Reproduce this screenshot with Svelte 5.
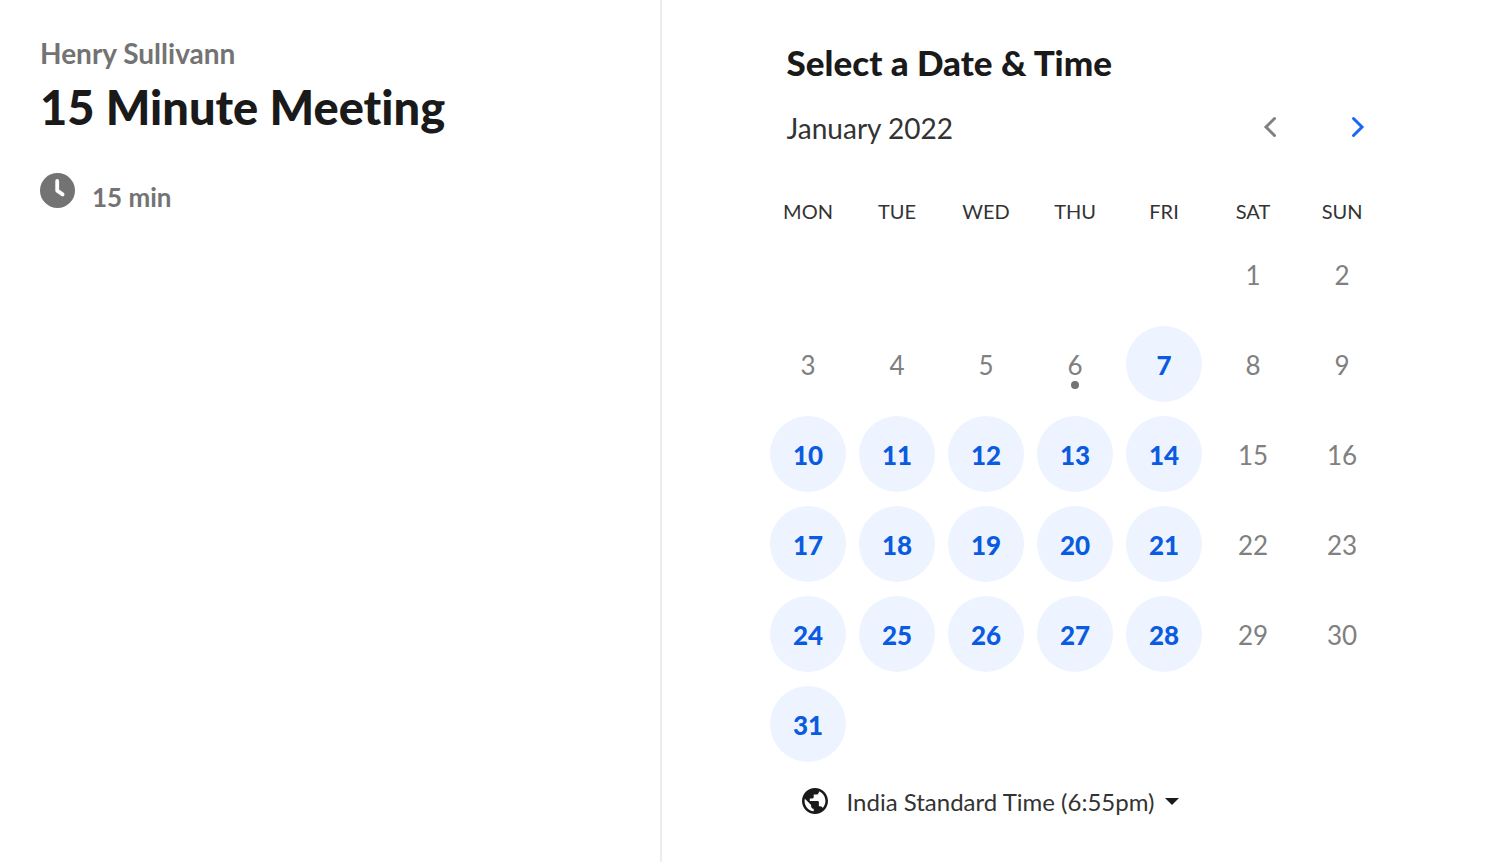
<script>
    const weekdays = ["Mon", "Tue", "Wed", "Thu", "Fri", "Sat", "Sun"];
    const today = 6;
    const lastDay = 31;
    const firstOffset = 5; // 1 January 2022 is a Saturday

    let selected = $state(null);
    let timezone = $state("Asia/Kolkata");

    // Six weeks, with null for the cells outside the month
    const weeks = Array.from({ length: 6 }, (_, week) =>
        weekdays.map((_, i) => {
            const day = week * 7 + i - firstOffset + 1;
            return day > 0 && day <= lastDay ? day : null;
        }),
    );

    const isAvailable = (day, column) => day > today && column < 5;
</script>

<main class="booking">
    <section class="details">
        <p class="host">Henry Sullivann</p>
        <h1>15 Minute Meeting</h1>
        <div class="duration">
            <svg class="clock" viewBox="0 0 35 35" aria-hidden="true">
                <circle cx="17.5" cy="17.5" r="17.5" fill="currentColor" />
                <path
                    d="M17.2 8v9.6l5.4 3.8"
                    fill="none"
                    stroke="#fff"
                    stroke-width="3.8"
                    stroke-linecap="round"
                    stroke-linejoin="round"
                />
            </svg>
            <span>15 min</span>
        </div>
    </section>

    <section class="picker">
        <h2>Select a Date &amp; Time</h2>

        <div class="month">
            <span class="month-name">January 2022</span>
            <div class="month-nav">
                <button class="prev" aria-label="Previous month" disabled>
                    <svg viewBox="0 0 16 24" aria-hidden="true">
                        <path d="M12.5 3.5L4 12l8.5 8.5" />
                    </svg>
                </button>
                <button class="next" aria-label="Next month">
                    <svg viewBox="0 0 16 24" aria-hidden="true">
                        <path d="M4.5 3.5L13 12l-8.5 8.5" />
                    </svg>
                </button>
            </div>
        </div>

        <table>
            <thead>
                <tr>
                    {#each weekdays as weekday}
                        <th scope="col">{weekday}</th>
                    {/each}
                </tr>
            </thead>
            <tbody>
                {#each weeks as week}
                    <tr>
                        {#each week as day, column}
                            <td>
                                {#if day}
                                    <button
                                        class="day"
                                        class:today={day === today}
                                        class:selected={day === selected}
                                        disabled={!isAvailable(day, column)}
                                        onclick={() => (selected = day)}
                                    >
                                        {day}
                                    </button>
                                {/if}
                            </td>
                        {/each}
                    </tr>
                {/each}
            </tbody>
        </table>

        <div class="timezone">
            <svg class="globe" viewBox="2 2 20 20" aria-hidden="true">
                <path
                    fill="currentColor"
                    d="M12 2C6.48 2 2 6.48 2 12s4.48 10 10 10 10-4.48 10-10S17.52 2 12 2zm-1 17.93c-3.95-.49-7-3.85-7-7.93 0-.62.08-1.21.21-1.79L9 15v1c0 1.1.9 2 2 2v1.93zm6.9-2.54c-.26-.81-1-1.39-1.9-1.39h-1v-3c0-.55-.45-1-1-1H8v-2h2c.55 0 1-.45 1-1V7h2c1.1 0 2-.9 2-2v-.41c2.93 1.19 5 4.06 5 7.41 0 2.08-.8 3.97-2.1 5.39z"
                />
            </svg>
            <select aria-label="Time zone" bind:value={timezone}>
                <option value="Asia/Kolkata">India Standard Time (6:55pm)</option>
            </select>
            <svg class="caret" viewBox="0 0 14 7" aria-hidden="true">
                <path d="M0 0h14L7 7z" fill="currentColor" />
            </svg>
        </div>
    </section>
</main>

<style>
    :global(body) {
        margin: 0;
        background: #fff;
        color: #1a1a1a;
        font-family: Lato, sans-serif;
        font-variant-ligatures: none;
    }

    button,
    select {
        margin: 0;
        padding: 0;
        border: none;
        background: none;
        color: inherit;
        font: inherit;
        cursor: pointer;
    }
    button:disabled {
        cursor: default;
    }

    .booking {
        display: flex;
        min-height: 100vh;
    }

    /* Event details */
    .details {
        flex: 0 0 44%;
        padding: 35px 40px;
        box-sizing: border-box;
    }
    .host {
        margin: 0;
        font-size: 28px;
        line-height: 36px;
        font-weight: 700;
        color: #737373;
    }
    h1 {
        margin: 8px 0 38px;
        font-size: 47px;
        line-height: 56px;
        font-weight: 900;
    }
    .duration {
        display: flex;
        gap: 17px;
        font-size: 26px;
        line-height: 36px;
        font-weight: 700;
        color: #737373;
    }
    .duration span {
        padding-top: 6px;
    }
    .clock {
        width: 35px;
        height: 35px;
    }

    /* Calendar */
    .picker {
        flex: 1;
        padding: 42px 102px 40px;
        border-left: 2px solid #ededed;
        box-sizing: border-box;
    }
    h2 {
        margin: 0;
        padding-left: 23px;
        font-size: 35px;
        line-height: 40px;
        font-weight: 900;
    }
    .month {
        display: flex;
        justify-content: space-between;
        align-items: center;
        max-width: 623px;
        height: 44px;
        margin-top: 23px;
        padding: 0 14px 0 23px;
        box-sizing: border-box;
    }
    .month-name {
        padding-top: 2px;
        font-size: 28px;
        line-height: 36px;
        color: #333;
    }
    .month-nav {
        display: flex;
        gap: 55px;
    }
    .month-nav button {
        display: flex;
        justify-content: center;
        width: 32px;
    }
    .month-nav svg {
        width: 16px;
        height: 24px;
        fill: none;
        stroke: currentColor;
        stroke-width: 3;
        stroke-linecap: round;
    }
    .prev {
        color: #808080;
    }
    .next {
        color: #1a66f5;
    }

    table {
        width: 100%;
        max-width: 623px;
        margin-top: 44px;
        border-collapse: collapse;
        table-layout: fixed;
    }
    th {
        height: 36px;
        padding: 0;
        font-size: 20px;
        line-height: 36px;
        font-weight: 400;
        color: #333;
        text-transform: uppercase;
    }
    td {
        height: 90px;
        padding: 0;
        text-align: center;
    }
    .day {
        position: relative;
        display: block;
        width: 76px;
        height: 76px;
        margin: 0 auto;
        padding-top: 2px;
        border-radius: 50%;
        background: #edf4ff;
        color: #0b5be0;
        font-size: 26px;
        font-weight: 900;
    }
    .day:disabled {
        background: none;
        color: #808080;
        font-weight: 400;
    }
    .selected {
        background: #0b5be0;
        color: #fff;
    }
    .today::after {
        content: "";
        position: absolute;
        left: 34px;
        bottom: 13px;
        width: 8px;
        height: 8px;
        border-radius: 50%;
        background: #737373;
    }

    .timezone {
        display: flex;
        align-items: center;
        margin-top: 13px;
        padding-left: 38px;
    }
    .globe {
        width: 26px;
        height: 26px;
        margin-right: 19px;
    }
    select {
        appearance: none;
        padding-top: 2px;
        font-size: 24px;
        line-height: 36px;
        color: #333;
    }
    .caret {
        width: 14px;
        height: 7px;
        margin-left: 9px;
        pointer-events: none;
    }
</style>
